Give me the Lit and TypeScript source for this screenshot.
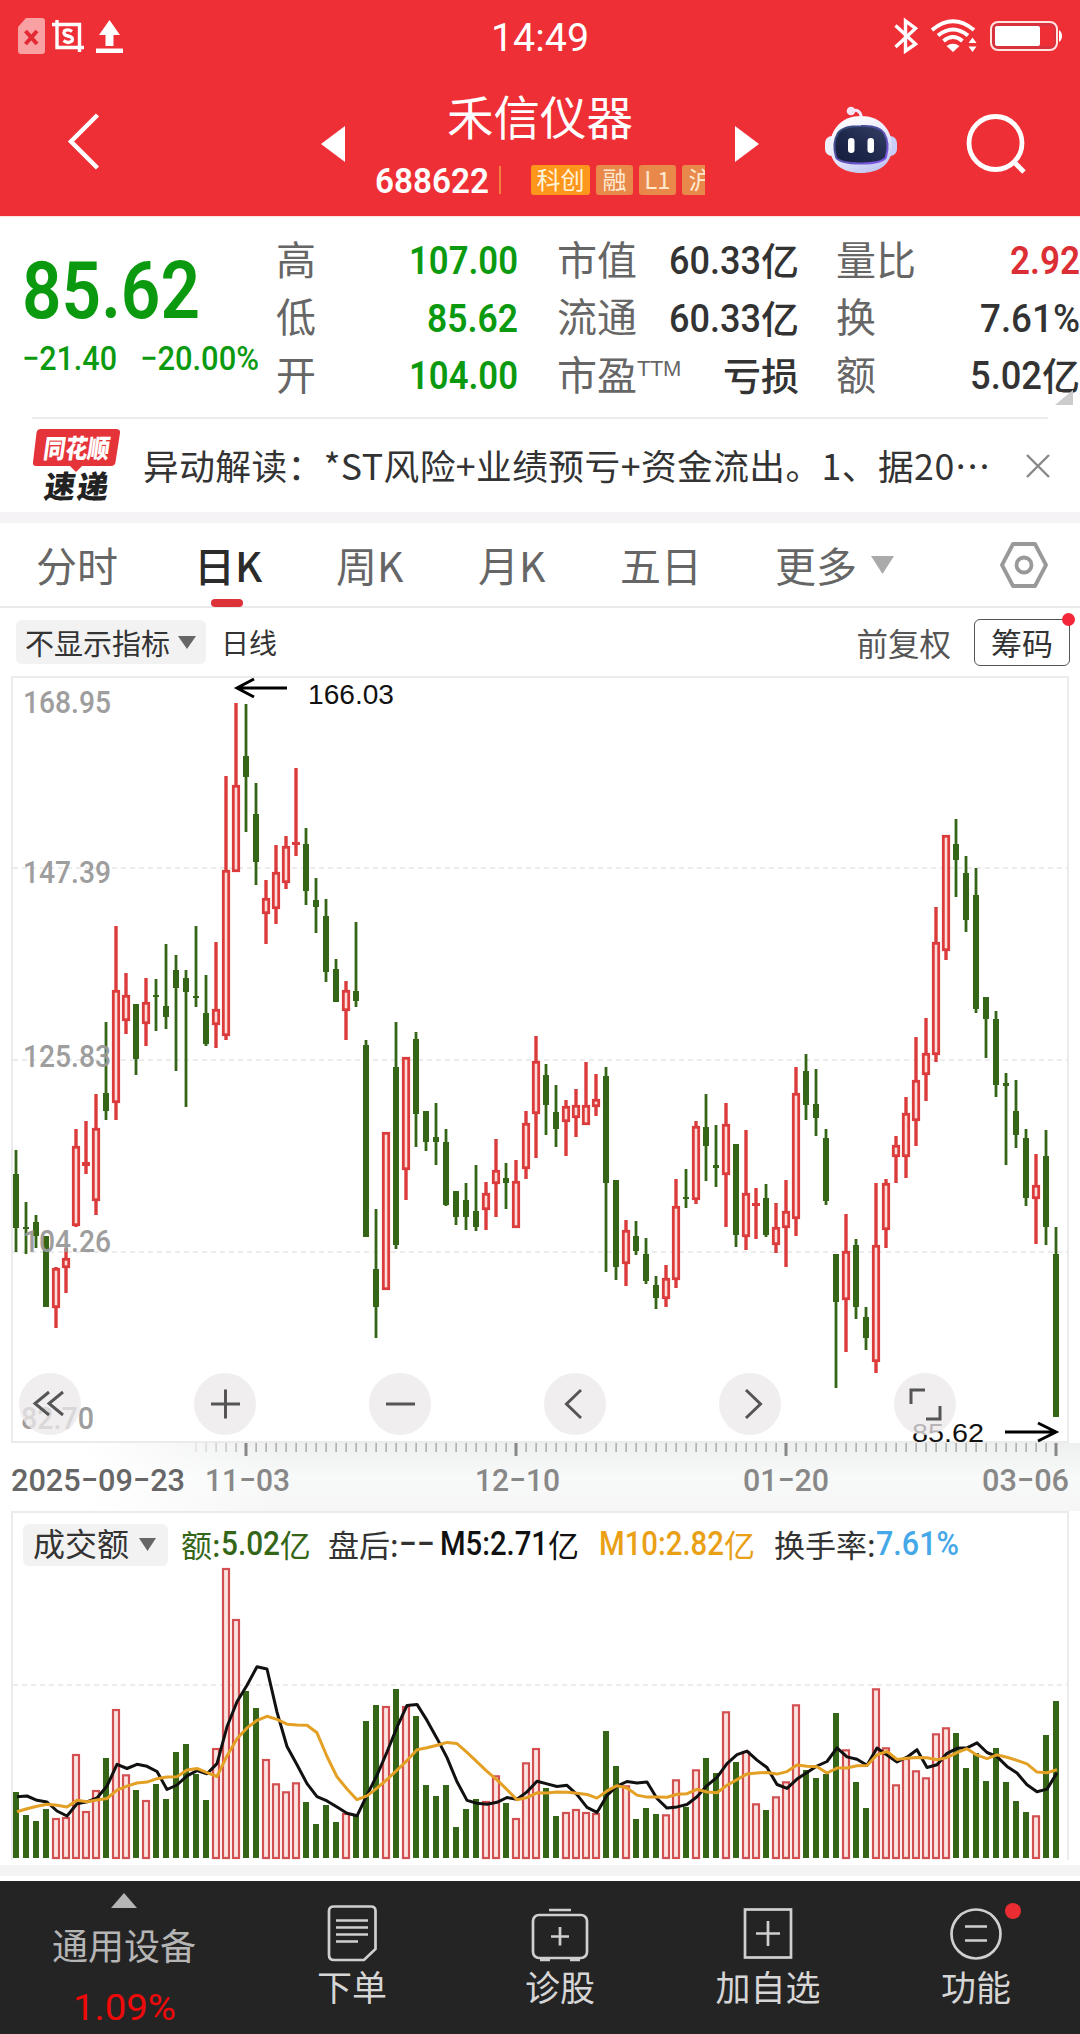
import { LitElement, html, svg, css } from "lit";
import { customElement } from "lit/decorators.js";

type Candle = [kind: "R" | "G", high: number, top: number, bottom: number, low: number];

const CANDLES: Candle[] = [
  ["G", 1150, 1174, 1228, 1252], ["G", 1202, 1227, 1229, 1254], ["G", 1215, 1222, 1236, 1248], ["G", 1236, 1236, 1307, 1307],
  ["R", 1267, 1268, 1308, 1328], ["R", 1248, 1258, 1268, 1293], ["R", 1129, 1146, 1226, 1227], ["R", 1121, 1162, 1166, 1174],
  ["R", 1094, 1128, 1201, 1215], ["G", 1022, 1093, 1111, 1120], ["R", 926, 990, 1103, 1120], ["R", 973, 995, 1021, 1034],
  ["G", 1004, 1004, 1059, 1075], ["R", 978, 1002, 1024, 1046], ["G", 979, 995, 997, 1031], ["G", 944, 1006, 1017, 1029],
  ["G", 955, 970, 988, 1071], ["G", 970, 978, 992, 1107], ["G", 926, 996, 998, 1007], ["G", 975, 1013, 1044, 1046],
  ["R", 942, 1009, 1025, 1048], ["R", 776, 870, 1036, 1040], ["R", 703, 785, 872, 872], ["G", 704, 756, 777, 832],
  ["G", 783, 814, 862, 885], ["R", 880, 898, 914, 944], ["R", 845, 872, 909, 924], ["R", 836, 846, 883, 889],
  ["R", 768, 842, 845, 856], ["G", 828, 844, 891, 905], ["G", 878, 900, 907, 933], ["G", 899, 916, 972, 982],
  ["G", 959, 969, 1002, 1002], ["R", 981, 990, 1011, 1040], ["G", 922, 991, 1001, 1007], ["G", 1040, 1045, 1237, 1237],
  ["G", 1209, 1269, 1307, 1338], ["R", 1132, 1132, 1290, 1290], ["G", 1022, 1067, 1245, 1249], ["R", 1057, 1057, 1170, 1200],
  ["G", 1032, 1039, 1114, 1147], ["G", 1111, 1111, 1142, 1151], ["G", 1103, 1137, 1142, 1165], ["G", 1129, 1142, 1205, 1206],
  ["G", 1191, 1191, 1217, 1225], ["G", 1183, 1200, 1217, 1230], ["G", 1165, 1211, 1227, 1231], ["R", 1182, 1193, 1210, 1230],
  ["R", 1139, 1170, 1184, 1217], ["G", 1163, 1178, 1183, 1209], ["R", 1160, 1181, 1228, 1228], ["R", 1111, 1123, 1169, 1179],
  ["R", 1036, 1061, 1114, 1158], ["G", 1064, 1075, 1105, 1135], ["G", 1085, 1112, 1129, 1147], ["R", 1100, 1106, 1122, 1156],
  ["R", 1089, 1105, 1118, 1137], ["R", 1062, 1105, 1125, 1125], ["R", 1074, 1099, 1107, 1116], ["G", 1067, 1076, 1183, 1272],
  ["G", 1180, 1180, 1267, 1280], ["R", 1220, 1230, 1264, 1286], ["G", 1221, 1236, 1251, 1255], ["G", 1238, 1254, 1281, 1284],
  ["G", 1276, 1285, 1298, 1309], ["R", 1265, 1278, 1299, 1307], ["R", 1179, 1206, 1280, 1288], ["G", 1169, 1197, 1199, 1208],
  ["R", 1121, 1126, 1200, 1204], ["G", 1094, 1127, 1146, 1181], ["G", 1125, 1165, 1168, 1187], ["R", 1103, 1124, 1175, 1227],
  ["G", 1144, 1144, 1235, 1247], ["R", 1130, 1193, 1237, 1250], ["R", 1188, 1203, 1206, 1239], ["G", 1184, 1198, 1235, 1237],
  ["R", 1203, 1227, 1245, 1253], ["R", 1180, 1211, 1228, 1267], ["R", 1067, 1093, 1219, 1236], ["G", 1054, 1071, 1105, 1120],
  ["G", 1069, 1104, 1118, 1136], ["G", 1129, 1138, 1201, 1205], ["G", 1254, 1254, 1302, 1388], ["R", 1214, 1251, 1300, 1352],
  ["G", 1239, 1245, 1307, 1319], ["G", 1307, 1317, 1338, 1350], ["R", 1183, 1245, 1362, 1373], ["R", 1179, 1183, 1230, 1248],
  ["R", 1136, 1145, 1157, 1183], ["R", 1097, 1113, 1157, 1178], ["R", 1037, 1080, 1121, 1146], ["R", 1018, 1053, 1075, 1101],
  ["R", 907, 942, 1055, 1062], ["R", 835, 835, 951, 960], ["G", 819, 844, 860, 897], ["G", 856, 873, 920, 932],
  ["G", 868, 895, 1009, 1013], ["G", 997, 997, 1019, 1058], ["G", 1011, 1019, 1085, 1097], ["G", 1073, 1083, 1086, 1165],
  ["G", 1080, 1111, 1135, 1148], ["G", 1129, 1138, 1198, 1206], ["R", 1154, 1185, 1199, 1244], ["G", 1130, 1156, 1227, 1245],
  ["G", 1227, 1254, 1417, 1417],
];

// Turnover per day, in thirds of a pixel above the base line.
const TURNOVER = [
  198, 129, 111, 147, 120, 123, 312, 141, 204, 300, 447, 251, 204, 174, 222, 177, 318, 342, 252, 174, 330, 870, 717, 501, 450,
  297, 224, 200, 227, 168, 102, 159, 108, 135, 129, 411, 459, 456, 507, 456, 426, 219, 186, 219, 93, 147, 177, 171, 248, 165,
  120, 287, 330, 210, 126, 138, 147, 138, 135, 381, 276, 218, 117, 150, 132, 131, 236, 153, 266, 300, 255, 440, 288, 321, 164,
  144, 185, 230, 461, 264, 240, 252, 435, 326, 228, 150, 509, 332, 221, 300, 263, 242, 374, 392, 375, 270, 315, 231, 330, 228,
  171, 138, 128, 369, 471,
];
const M5_HEAD = [184, 186, 173, 168];
const M10_HEAD = [139, 148, 155, 161, 158, 153, 173, 169, 174];

const xAt = (i: number) => 16 + i * 10;
const BASE = 1858;

const average = (n: number, head: number[]) =>
  TURNOVER.map((_, i) => {
    const v = i < head.length ? head[i] : TURNOVER.slice(i - n + 1, i + 1).reduce((a, b) => a + b, 0) / n;
    return `${xAt(i) + 1},${(BASE - v / 3).toFixed(1)}`;
  }).join(" ");

/** Numerals squeezed to the narrow width of a DIN face. */
const num = (text: string, width: number, size: number, weight = 500) => html`
  <svg class="num" width=${width} height=${size} viewBox="0 0 ${width} ${size}">
    <text x="0" y=${size * 0.856} font-size=${size} font-weight=${weight} textLength=${width}
      lengthAdjust="spacingAndGlyphs">${text}</text>
  </svg>`;

const label = (text: string, x: number, y: number, width: number, size: number, cls: string) => svg`
  <text class=${cls} x=${x} y=${y} font-size=${size} textLength=${width} lengthAdjust="spacingAndGlyphs">${text}</text>`;

const caret = (w: number, h: number, up = false) => html`
  <svg class="caret" width=${w} height=${h} viewBox="0 0 10 10" preserveAspectRatio="none">
    <path d=${up ? "M5 0L10 10H0z" : "M0 0H10L5 10z"} fill="currentColor" />
  </svg>`;

@customElement("stock-header")
class StockHeader extends LitElement {
  static styles = css`
    :host { display: block; height: 216px; background: #ef2f36; color: #fff; font-family: Roboto, "Noto Sans CJK SC", sans-serif; }
    svg { display: block; overflow: visible; flex: none; }
    .num { fill: currentColor; }
    .status { display: grid; grid-template-columns: 1fr auto 1fr; align-items: center; height: 72px; padding: 0 18px 0 18px; }
    .status > .num { margin-top: 3px; }
    .left, .right { display: flex; align-items: center; }
    .left { gap: 7px; }
    .left .up { margin-left: 5px; }
    .right { justify-content: flex-end; gap: 13px; }
    .bar { display: grid; grid-template-columns: 68px 253px 24px 390px 24px 66px 72px 68px 60px; align-items: start; height: 144px; }
    .back { grid-column: 2; margin-top: 41px; }
    .prev { grid-column: 3; margin-top: 54px; }
    .next { grid-column: 5; margin-top: 54px; }
    .robot { grid-column: 7; margin-top: 34px; }
    .search { grid-column: 9; margin-left: 1px; margin-top: 42px; }
    .mid { grid-column: 4; padding-top: 21px; }
    .name { height: 52px; line-height: 52px; font-size: 46.5px; text-align: center; font-weight: 400; }
    .code { display: flex; align-items: center; height: 30px; margin: 20px 0 0 30px; }
    .rule { width: 2px; height: 28px; background: #f3803f; margin-left: 10px; }
    .tags { display: flex; gap: 6px; width: 174px; margin-left: 30px; overflow: hidden; }
    .tag { flex: none; box-sizing: border-box; width: 37px; height: 30px; line-height: 28px; border-radius: 3px; background: #e8894b; color: #ffe9cf; font-size: 24px; text-align: center; font-family: "Noto Sans CJK SC", sans-serif; }
    .tag.main { width: 59px; background: #fe961c; color: #fff3d8; }
  `;
  render() {
    return html`
      <div class="status">
        <div class="left">
          <svg width="27" height="36" viewBox="0 0 27 36">
            <path d="M8 0H24a3 3 0 0 1 3 3V33a3 3 0 0 1-3 3H3a3 3 0 0 1-3-3V9z" fill="#f9a0a3" />
            <path d="M7.500 13L19 26M19 13L7.500 26" stroke="#e32a33" stroke-width="4" />
          </svg>
          <svg width="32" height="32" viewBox="0 0 32 32" fill="none" stroke="#fff" stroke-width="3.400">
            <path d="M5 0V27.500H32M0 4.500H27.500V32" />
            <path d="M20 11.500Q16 8.500 12.500 11Q10.500 15 16 16Q22 17 20 21Q16 24 11.500 20.500" />
          </svg>
          <svg class="up" width="27" height="33" viewBox="0 0 27 33" fill="#fff">
            <path d="M13.500 0L24 15H17.500V26H9.500V15H3z" /><path d="M0 28.500H27V33H0z" />
          </svg>
        </div>
        ${num("14:49", 98, 39, 400)}
        <div class="right">
          <svg width="24" height="34" viewBox="0 0 24 34" fill="none" stroke="#fff" stroke-width="3.400">
            <path d="M1.500 6.500L21.500 25L11.500 32V2L21.500 9.500L1.500 28" />
          </svg>
          <svg width="46" height="34" viewBox="0 0 46 34">
            <g fill="none" stroke="#fff" stroke-width="4">
              <path d="M1 11Q22 -6.500 43 11M7 16.500Q22 4.500 37 16.500M12.500 22Q22 14 31.500 22" />
            </g>
            <path d="M22 33L15.500 27Q22 22.500 28.500 27zM41.500 18.500L45.500 24H37.500zM41.500 33L45.500 27.500H37.500z" fill="#fff" />
          </svg>
          <svg width="72" height="30" viewBox="0 0 72 30">
            <rect x="1" y="1" width="66" height="28" rx="7" fill="#d8333d" stroke="#ffe4e2" stroke-width="2" />
            <rect x="50" y="5" width="14" height="20" fill="#ef2f36" />
            <rect x="5" y="5" width="45" height="20" rx="2" fill="#fff" />
            <path d="M69 9Q72 11 72 15T69 21z" fill="#fff" />
          </svg>
        </div>
      </div>
      <div class="bar">
        <svg class="back" width="31" height="57" viewBox="0 0 31 57" fill="none" stroke="#fff" stroke-width="4.500">
          <path d="M29.500 2L3 28.500L29.500 55" />
        </svg>
        <svg class="prev" width="24" height="36" viewBox="0 0 24 36"><path d="M24 0V36L0 18z" fill="#fff" /></svg>
        <div class="mid">
          <div class="name">禾信仪器</div>
          <div class="code">
            ${num("688622", 114, 35, 600)}
            <span class="rule"></span>
            <div class="tags">
              <span class="tag main">科创</span><span class="tag">融</span><span class="tag">L1</span><span class="tag">沪</span>
            </div>
          </div>
        </div>
        <svg class="next" width="24" height="36" viewBox="0 0 24 36"><path d="M0 0V36L24 18z" fill="#fff" /></svg>
        <svg class="robot" width="72" height="68" viewBox="0 0 72 68">
          <defs>
            <linearGradient id="shell" x1="0.200" y1="0" x2="0.700" y2="1">
              <stop offset="0" stop-color="#fff" /><stop offset="0.600" stop-color="#e4e5fb" /><stop offset="1" stop-color="#bfc3f0" />
            </linearGradient>
            <linearGradient id="visor" x1="1" y1="0" x2="0" y2="1">
              <stop offset="0" stop-color="#353f66" /><stop offset="0.500" stop-color="#202a4d" /><stop offset="1" stop-color="#141c3c" />
            </linearGradient>
            <linearGradient id="rim" x1="0" y1="0" x2="1" y2="1">
              <stop offset="0" stop-color="#2c4a6e" /><stop offset="1" stop-color="#8458ee" />
            </linearGradient>
          </defs>
          <path d="M26 5Q36 2 36.500 13" fill="none" stroke="#f4e8fa" stroke-width="3" />
          <circle cx="26" cy="5" r="4.300" fill="#f6e4f4" />
          <rect x="0" y="30" width="15" height="20" rx="7" fill="#f0effc" />
          <rect x="57" y="30" width="15" height="20" rx="7" fill="#c9cdf8" />
          <path d="M36 10C55 10 67 23 67 41C67 58 54 67 36 67C18 67 5 58 5 41C5 23 17 10 36 10z" fill="url(#shell)" />
          <path d="M36 20Q54 19 59 27Q65 37 61 51Q58 57.500 36 57.500Q14 57.500 11 51Q7 37 13 27Q18 20 36 20z" fill="url(#visor)" stroke="url(#rim)" stroke-width="2" />
          <rect x="23" y="32" width="6.500" height="15" rx="3.200" fill="#fff" /><rect x="42.500" y="32" width="6.500" height="15" rx="3.200" fill="#fff" />
        </svg>
        <svg class="search" width="60" height="60" viewBox="0 0 60 60" fill="none" stroke="#fff" stroke-width="4.800">
          <circle cx="29.500" cy="29" r="26.500" /><path d="M48 48L58 58" />
        </svg>
      </div>`;
  }
}

@customElement("quote-panel")
class QuotePanel extends LitElement {
  static styles = css`
    :host { display: block; background: #fff; color: #333; font-family: "Noto Sans CJK SC", sans-serif; }
    svg { display: block; overflow: visible; flex: none; }
    .num { fill: currentColor; font-family: Roboto, sans-serif; }
    .quote { display: grid; grid-template-columns: 254px 242px 242px 244px; height: 201px; box-sizing: border-box; padding: 15px 0 0 22px; border-top: 1px solid #fbe3dc; }
    .price { color: #0b9a0f; padding-top: 18px; }
    .change { display: flex; gap: 23px; margin-top: 11px; }
    .col { display: grid; grid-auto-rows: 57.5px; }
    .two { margin-left: 39px; margin-right: -80px; width: 242px; }
    .three { margin-left: 76px; margin-right: -80px; width: 244px; }
    .cell { display: flex; align-items: center; justify-content: space-between; font-size: 40px; line-height: 57px; }
    .key { color: #666; margin-top: -5px; }
    .key sup { font: 22px/1 "Liberation Sans", sans-serif; vertical-align: 14px; letter-spacing: -0.500px; }
    .val { display: flex; align-items: center; font-weight: 500; font-size: 38px; }
    .val span { margin-top: -4px; }
    .green { color: #0b9a0f; }
    .red { color: #dc2f35; }
    .corner { display: flex; justify-content: flex-end; height: 15px; margin-top: -27px; padding-right: 7px; }
    .news { display: flex; align-items: center; box-sizing: border-box; height: 95px; margin: 12px 32px 0 32px; border-top: 2px solid #ececf0; padding-right: 0; }
    .headline { margin: -2px 0 0 22px; flex: 1; font-size: 35.700px; letter-spacing: 0.450px; line-height: 50px; white-space: nowrap; color: #333; }
    .cross { margin-right: -2px; }
    .gap { height: 11px; background: #f5f3f5; }
    .logo { font-family: "Noto Sans CJK SC", sans-serif; font-weight: 900; }
  `;
  render() {
    const yi = html`<span>亿</span>`;
    return html`
      <div class="quote">
        <div class="price">
          ${num("85.62", 178, 80, 600)}
          <div class="change">${num("−21.40", 95, 34)} ${num("−20.00%", 119, 34)}</div>
        </div>
        <div class="col">
          <div class="cell"><span class="key">高</span><span class="val green">${num("107.00", 109, 39, 600)}</span></div>
          <div class="cell"><span class="key">低</span><span class="val green">${num("85.62", 91, 39, 600)}</span></div>
          <div class="cell"><span class="key">开</span><span class="val green">${num("104.00", 109, 39, 600)}</span></div>
        </div>
        <div class="col two">
          <div class="cell"><span class="key">市值</span><span class="val">${num("60.33", 92, 39)}${yi}</span></div>
          <div class="cell"><span class="key">流通</span><span class="val">${num("60.33", 92, 39)}${yi}</span></div>
          <div class="cell"><span class="key">市盈<sup>TTM</sup></span><span class="val"><span>亏损</span></span></div>
        </div>
        <div class="col three">
          <div class="cell"><span class="key">量比</span><span class="val red">${num("2.92", 70, 39, 600)}</span></div>
          <div class="cell"><span class="key">换</span><span class="val">${num("7.61%", 100, 39)}</span></div>
          <div class="cell"><span class="key">额</span><span class="val">${num("5.02", 72, 39)}${yi}</span></div>
        </div>
      </div>
      <div class="corner"><svg width="18" height="15" viewBox="0 0 18 15"><path d="M18 0V15H0z" fill="#ccc" /></svg></div>
      <div class="news">
        <svg class="logo" width="89" height="74" viewBox="0 0 89 74">
          <path d="M9 0H84Q88.500 0 88 4L83.500 33Q83 37 79 37H50L44 43L38 37H4Q0.500 37 1 33L4.500 4Q5 0 9 0z" fill="#e5333a" />
          <text transform="translate(10.500 28.500) skewX(-8)" font-size="26" fill="#fff" textLength="66" lengthAdjust="spacingAndGlyphs">同花顺</text>
          <text transform="translate(11 68.500) skewX(-8)" font-size="31" fill="#222" textLength="64" lengthAdjust="spacing">速递</text>
        </svg>
        <span class="headline">异动解读：*ST风险+业绩预亏+资金流出。1、据20⋯</span>
        <svg class="cross" width="24" height="24" viewBox="0 0 24 24" stroke="#888" stroke-width="2.400"><path d="M1 1L23 23M23 1L1 23" /></svg>
      </div>
      <div class="gap"></div>`;
  }
}

@customElement("k-line-chart")
class KLineChart extends LitElement {
  static styles = css`
    :host { display: block; background: #fff; color: #333; font-family: "Noto Sans CJK SC", sans-serif; }
    svg { display: block; overflow: visible; flex: none; }
    .num { fill: currentColor; font-family: Roboto, sans-serif; }
    .tabs { display: flex; align-items: flex-start; height: 85px; box-sizing: border-box; padding: 0 32px 0 36px; border-bottom: 2px solid #e9e9e9; font-size: 41px; color: #666; }
    .tab { flex: none; height: 83px; line-height: 83px; white-space: nowrap; }
    .t1 { width: 158px; } .t2 { width: 142px; } .t3 { width: 142px; } .t4 { width: 142px; } .t5 { width: 155px; }
    .tab.on { color: #2b2b2b; font-weight: 500; }
    .on i { display: block; width: 32px; height: 8px; margin: -7px 0 0 17px; border-radius: 4px; background: #dc3238; }
    .more { display: flex; align-items: center; gap: 14px; }
    .more .caret { color: #aaa; }
    .gear { margin: 19px 0 0 auto; }
    .tools { display: flex; align-items: center; height: 68px; padding: 0 10px 0 16px; box-sizing: border-box; }
    .pick { display: flex; align-items: center; box-sizing: border-box; background: #f2f2f2; border-radius: 6px; }
    .pick .caret { color: #666; }
    .indicator { width: 190px; height: 44px; padding-left: 9px; gap: 8px; font-size: 29px; margin-right: 15px; }
    .period { font-size: 28px; }
    .adjust { margin-left: auto; font-size: 31.500px; color: #555; }
    .chips { position: relative; box-sizing: border-box; width: 96px; height: 47px; margin-left: 23px; border: 1.500px solid #555; border-radius: 6px; font-size: 31px; line-height: 43px; text-align: center; }
    .chips::after { content: ""; position: absolute; right: -6px; top: -7px; width: 13px; height: 13px; border-radius: 50%; background: #f3263a; }
    .plot { position: relative; margin: 0 11px; border: 2px solid #ebebeb; }
    .grid { stroke: #e6e6e6; stroke-width: 1.500; stroke-dasharray: 5 4; }
    .price { fill: #999; font-family: Roboto, sans-serif; font-weight: 500; }
    .mark { fill: #111; font-family: "Liberation Sans", sans-serif; }
    .up { fill: #fbdcd9; stroke: #dc3b3b; stroke-width: 2.800; }
    .upw { fill: #dc3b3b; }
    .down { fill: #356617; }
    .vol { fill: #fbe4e2; stroke: #d24f52; stroke-width: 2.200; }
    .buttons { position: absolute; left: 6px; bottom: 6px; display: flex; gap: 113px; }
    .round { width: 62px; height: 62px; border-radius: 50%; background: rgba(236, 233, 235, 0.76); }
    .axis { height: 68px; background: linear-gradient(90deg, #fff 8%, rgba(255, 255, 255, 0) 26%), linear-gradient(#eeefef, #f8f9f9 50%, #f6f6f6); }
    .date { fill: #888; font-family: Roboto, sans-serif; font-weight: 500; }
    .date.first { fill: #666; }
    .turnover { margin: 0 11px; border: 2px solid #ebebeb; border-bottom: 0; }
    .legend { display: flex; align-items: center; height: 54px; padding: 7px 0 0 10px; box-sizing: border-box; font-size: 31px; line-height: 40px; white-space: nowrap; }
    .amount { width: 145px; height: 42px; padding-left: 10px; gap: 10px; font-size: 32px; line-height: 36px; margin: 2px 13px 0 0; }
    .amount span { margin-top: -5px; }
    .item { display: flex; align-items: center; }
    .g { color: #356617; } .k { color: #111; } .y { color: #e9a015; } .b { color: #45a8e8; }
    .w148 { width: 147px; } .w111 { width: 112px; } .w160 { width: 159px; } .w174 { width: 175px; }
    .gap { height: 11px; margin: 5px 0 5px; background: #f5f4f5; }
  `;
  private candle([kind, high, top, bottom, low]: Candle, i: number) {
    const x = xAt(i);
    if (kind === "G") {
      return svg`<g class="down"><rect x=${x - 1.4} y=${high} width="2.800" height=${low - high} />
        <rect x=${x - 3} y=${top} width="6" height=${bottom - top} /></g>`;
    }
    const wick = svg`<rect class="upw" x=${x - 1.7} y=${high} width="3.400" height=${low - high} />`;
    return bottom - top < 6
      ? svg`${wick}<rect class="upw" x=${x - 4} y=${top} width="8" height=${bottom - top} />`
      : svg`${wick}<rect class="up" x=${x - 2.7} y=${top + 1.3} width="5.400" height=${bottom - top - 2.6} />`;
  }
  private bar(v: number, i: number) {
    const x = xAt(i), h = v / 3;
    return CANDLES[i][0] === "G"
      ? svg`<rect class="down" x=${x - 3} y=${BASE - h} width="6" height=${h} />`
      : svg`<rect class="vol" x=${x - 3} y=${BASE - h + 1} width="6" height=${h - 1} />`;
  }
  render() {
    const ticks = Array.from({ length: 87 }, (_, i) => 196 + i * 10);
    const glyphs = [
      "M30 19L16 30.500L30 42M44 19L30 30.500L44 42",
      "M17 31H46M31.500 16.500V45.500",
      "M17 31H46",
      "M37 17L22.500 31L37 45",
      "M27 17L41.500 31L27 45",
      "M17 31V17H31M32 46H46V33",
    ];
    return html`
      <div class="tabs">
        <span class="tab t1">分时</span>
        <span class="tab on t2">日K<i></i></span>
        <span class="tab t3">周K</span>
        <span class="tab t4">月K</span>
        <span class="tab t5">五日</span>
        <span class="tab more">更多${caret(23, 18)}</span>
        <svg class="gear" width="48" height="46" viewBox="0 0 48 46" fill="none" stroke="#999" stroke-width="3.800" stroke-linejoin="round">
          <path d="M13 2H35L46 23L35 44H13L2 23z" /><circle cx="24" cy="23" r="7.500" />
        </svg>
      </div>
      <div class="tools">
        <span class="pick indicator">不显示指标${caret(18, 13)}</span>
        <span class="period">日线</span>
        <span class="adjust">前复权</span>
        <span class="chips">筹码</span>
      </div>
      <div class="plot">
        <svg width="1054" height="763" viewBox="13 678 1054 763">
          ${[868, 1060, 1252].map((y) => svg`<line class="grid" x1="13" x2="1067" y1=${y} y2=${y} />`)}
          ${CANDLES.map((c, i) => this.candle(c, i))}
          <g opacity="0.950">
            ${label("168.95", 23, 713, 88, 31, "price")} ${label("147.39", 23, 883, 88, 31, "price")}
            ${label("125.83", 23, 1067, 88, 31, "price")} ${label("104.26", 23, 1252, 88, 31, "price")}
            ${label("82.70", 21, 1429, 73, 31, "price")}
          </g>
          <g fill="none" stroke="#000" stroke-width="3">
            <path d="M287 688H237M254 679L237 688L254 697" />
            <path d="M1005 1432H1056M1038 1423L1056 1432L1038 1441" />
          </g>
          ${label("166.03", 308, 704, 86, 27, "mark")} ${label("85.62", 912, 1442, 72, 26, "mark")}
        </svg>
        <div class="buttons">
          ${glyphs.map((d) => html`<span class="round"><svg width="62" height="62" viewBox="0 0 62 62" fill="none" stroke="#555"
            stroke-width="3"><path d=${d} /></svg></span>`)}
        </div>
      </div>
      <div class="axis">
        <svg width="1080" height="68" viewBox="0 1443 1080 68">
          ${ticks.map((x) => {
            const major = (x - 246) % 270 === 0;
            return svg`<rect x=${x - (major ? 1.5 : 0.5)} y="1443" width=${major ? 3 : 1.2} height=${major ? 13 : 9}
              fill=${major ? "#888" : "#999"} opacity=${x < 246 ? (x - 176) / 80 : 1} />`;
          })}
          ${label("2025−09−23", 11, 1491, 174, 32, "date first")} ${label("11−03", 205, 1491, 85, 32, "date")}
          ${label("12−10", 475, 1491, 85, 32, "date")} ${label("01−20", 743, 1491, 86, 32, "date")}
          ${label("03−06", 982, 1491, 87, 32, "date")}
        </svg>
      </div>
      <div class="turnover">
        <div class="legend">
          <span class="pick amount"><span>成交额</span>${caret(17, 13)}</span>
          <span class="item g w148">额:${num("5.02", 59, 33)}亿</span>
          <span class="item w111">盘后:${num("−−", 36, 33)}</span>
          <span class="item k w160">${num("M5:2.71", 108, 33)}亿</span>
          <span class="item y w174">${num("M10:2.82", 125, 33)}亿</span>
          <span class="item">换手率:</span><span class="item b">${num("7.61%", 83, 33)}</span>
        </div>
        <svg width="1054" height="293" viewBox="13 1567 1054 293">
          <line class="grid" x1="13" x2="1067" y1="1685" y2="1685" />
          ${TURNOVER.map((v, i) => this.bar(v, i))}
          <g fill="none" stroke-width="3" stroke-linejoin="round">
            <polyline points=${average(5, M5_HEAD)} stroke="#111" />
            <polyline points=${average(10, M10_HEAD)} stroke="#e3a024" />
          </g>
        </svg>
      </div>
      <div class="gap"></div>`;
  }
}

@customElement("bottom-bar")
class BottomBar extends LitElement {
  static styles = css`
    :host { display: grid; grid-template-columns: 248px repeat(4, 208px); height: 153px; background: #242424; color: #d6d6d6; font-family: "Noto Sans CJK SC", sans-serif; }
    svg { display: block; overflow: visible; flex: none; }
    .num { fill: currentColor; font-family: Roboto, sans-serif; }
    .sector, .item { display: flex; flex-direction: column; align-items: center; }
    .sector { padding-top: 12px; color: #b5b5b5; }
    .title { font-size: 36px; line-height: 50px; margin-top: 11px; }
    .pct { color: #ee0a0a; margin-top: 19px; }
    .item { padding-top: 24px; font-size: 35px; line-height: 50px; }
    .icon { width: 56px; height: 56px; margin-bottom: 0; fill: none; stroke: #cfcfcf; stroke-width: 2.700; }
  `;
  render() {
    const items = [
      { name: "下单", icon: svg`<path d="M10 1.500H47Q51.500 1.500 51.500 6V44L40 55H10Q5 55 5 50V6Q5 1.500 10 1.500zM12 15.500H44M12 22.500H44M12 29.500H44M12 36.500H34" />` },
      { name: "诊股", icon: svg`<rect x="1" y="10" width="54" height="43" rx="6" /><path d="M17 5H39M28 22V40.500M19 31.500H37M8 55H18M38 55H48" />` },
      { name: "加自选", icon: svg`<rect x="5" y="4.500" width="46" height="48" /><path d="M28 16V41M16 28.500H40" />` },
      { name: "功能", icon: svg`<circle cx="28" cy="29" r="24.500" /><path d="M17 21.500H39M17 35.500H39" /><circle cx="65" cy="6" r="8" fill="#ea2d33" stroke="none" />` },
    ];
    return html`
      <div class="sector">
        ${caret(26, 15, true)}
        <span class="title">通用设备</span>
        <span class="pct">${num("1.09%", 103, 37, 400)}</span>
      </div>
      ${items.map((it) => html`<div class="item"><svg class="icon" viewBox="0 0 56 56">${it.icon}</svg>${it.name}</div>`)}`;
  }
}

@customElement("app-root")
class AppRoot extends LitElement {
  static styles = css`
    :host { display: flex; flex-direction: column; width: 1080px; height: 2034px; background: #fff; overflow: hidden; }
    stock-header, quote-panel, k-line-chart, bottom-bar { flex: none; }
    bottom-bar { margin-top: auto; }
  `;
  render() {
    return html`<stock-header></stock-header><quote-panel></quote-panel><k-line-chart></k-line-chart><bottom-bar></bottom-bar>`;
  }
}
